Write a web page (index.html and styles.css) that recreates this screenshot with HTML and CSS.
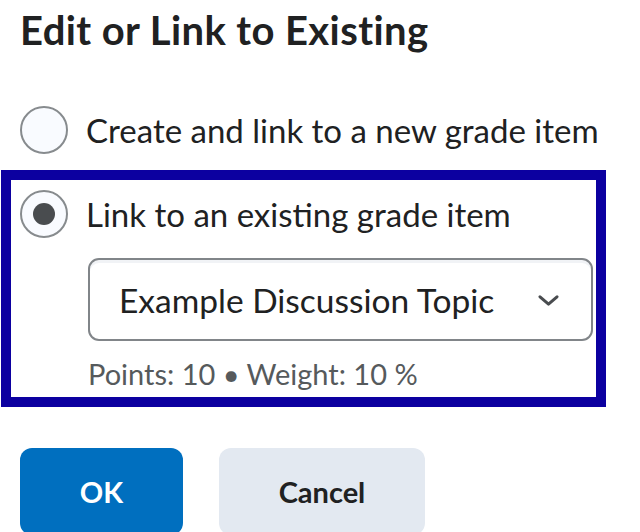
FILE: index.html
```html
<!DOCTYPE html>
<html lang="en">
<head>
<meta charset="utf-8">
<title>Edit or Link to Existing</title>
<link rel="stylesheet" href="styles.css">
</head>
<body>
<main class="dialog">
  <h1 class="title">Edit or Link to Existing</h1>
  <label class="option">
    <span class="radio"></span>
    <span class="label">Create and link to a new grade item</span>
  </label>
  <section class="highlight">
    <label class="option">
      <span class="radio checked"></span>
      <span class="label">Link to an existing grade item</span>
    </label>
    <div class="select">
      <span class="select-text">Example Discussion Topic</span>
      <svg class="chevron" width="21" height="11" viewBox="0 0 21 11" aria-hidden="true">
        <path d="M2 1.8 L10.5 9.2 L19 1.8" fill="none" stroke="#494c4f" stroke-width="3" stroke-linecap="round" stroke-linejoin="round"/>
      </svg>
    </div>
    <div class="meta">Points: 10 &bull; Weight: 10 %</div>
  </section>
  <div class="actions">
    <button class="btn btn-primary">OK</button>
    <button class="btn btn-secondary">Cancel</button>
  </div>
</main>
</body>
</html>
```

FILE: styles.css
```css
html, body {
  margin: 0;
  padding: 0;
  background: #ffffff;
  overflow: hidden;
}

body {
  font-family: Lato, "Noto Sans", sans-serif;
  color: #202122;
}

.dialog {
  padding: 7px 0 0 20px;
}

.title {
  margin: 0;
  font-size: 40px;
  line-height: 46px;
  font-weight: 700;
  letter-spacing: 0.4px;
  color: #202122;
  font-variant-ligatures: none;
}

.option {
  display: flex;
  align-items: center;
  gap: 18px;
  height: 48px;
}

.dialog > .option {
  margin-top: 53px;
}

.radio {
  box-sizing: border-box;
  width: 48px;
  height: 48px;
  flex: none;
  border: 2px solid #878b8e;
  border-radius: 50%;
  background: #f9fbff;
  display: flex;
  align-items: center;
  justify-content: center;
}

.radio.checked::after {
  content: "";
  width: 22px;
  height: 22px;
  border-radius: 50%;
  background: #494c4f;
}

.label {
  font-size: 33px;
  line-height: 40px;
  color: #202122;
}

.highlight {
  box-sizing: border-box;
  width: 605px;
  margin: 16px 0 0 -19px;
  border: 10px solid #0c00a0;
  padding: 10px 3px 6px 9px;
}

.select {
  box-sizing: border-box;
  margin: 20px 0 0 68px;
  width: 505px;
  height: 83px;
  border: 2px solid #818589;
  border-radius: 11px;
  background: #ffffff;
  box-shadow: inset 0 3px 0 0 rgba(185, 194, 208, 0.2);
  display: flex;
  align-items: center;
  justify-content: space-between;
  padding: 0 32px 0 29px;
}

.select-text {
  font-size: 33.5px;
  line-height: 40px;
  color: #202122;
}

.chevron {
  display: block;
  margin-top: 2px;
}

.meta {
  margin: 16px 0 0 68px;
  font-size: 29px;
  line-height: 34px;
  color: #565a5c;
}

.actions {
  display: flex;
  gap: 36px;
  margin-top: 41px;
}

.btn {
  box-sizing: border-box;
  height: 87px;
  border: none;
  border-radius: 12px;
  font-family: Lato, "Noto Sans", sans-serif;
  font-size: 29px;
  font-weight: 700;
  padding: 0;
  cursor: pointer;
}

.btn-primary {
  width: 163px;
  background: #006fbf;
  color: #ffffff;
}

.btn-secondary {
  width: 206px;
  background: #e3e9f1;
  color: #202122;
}
```
